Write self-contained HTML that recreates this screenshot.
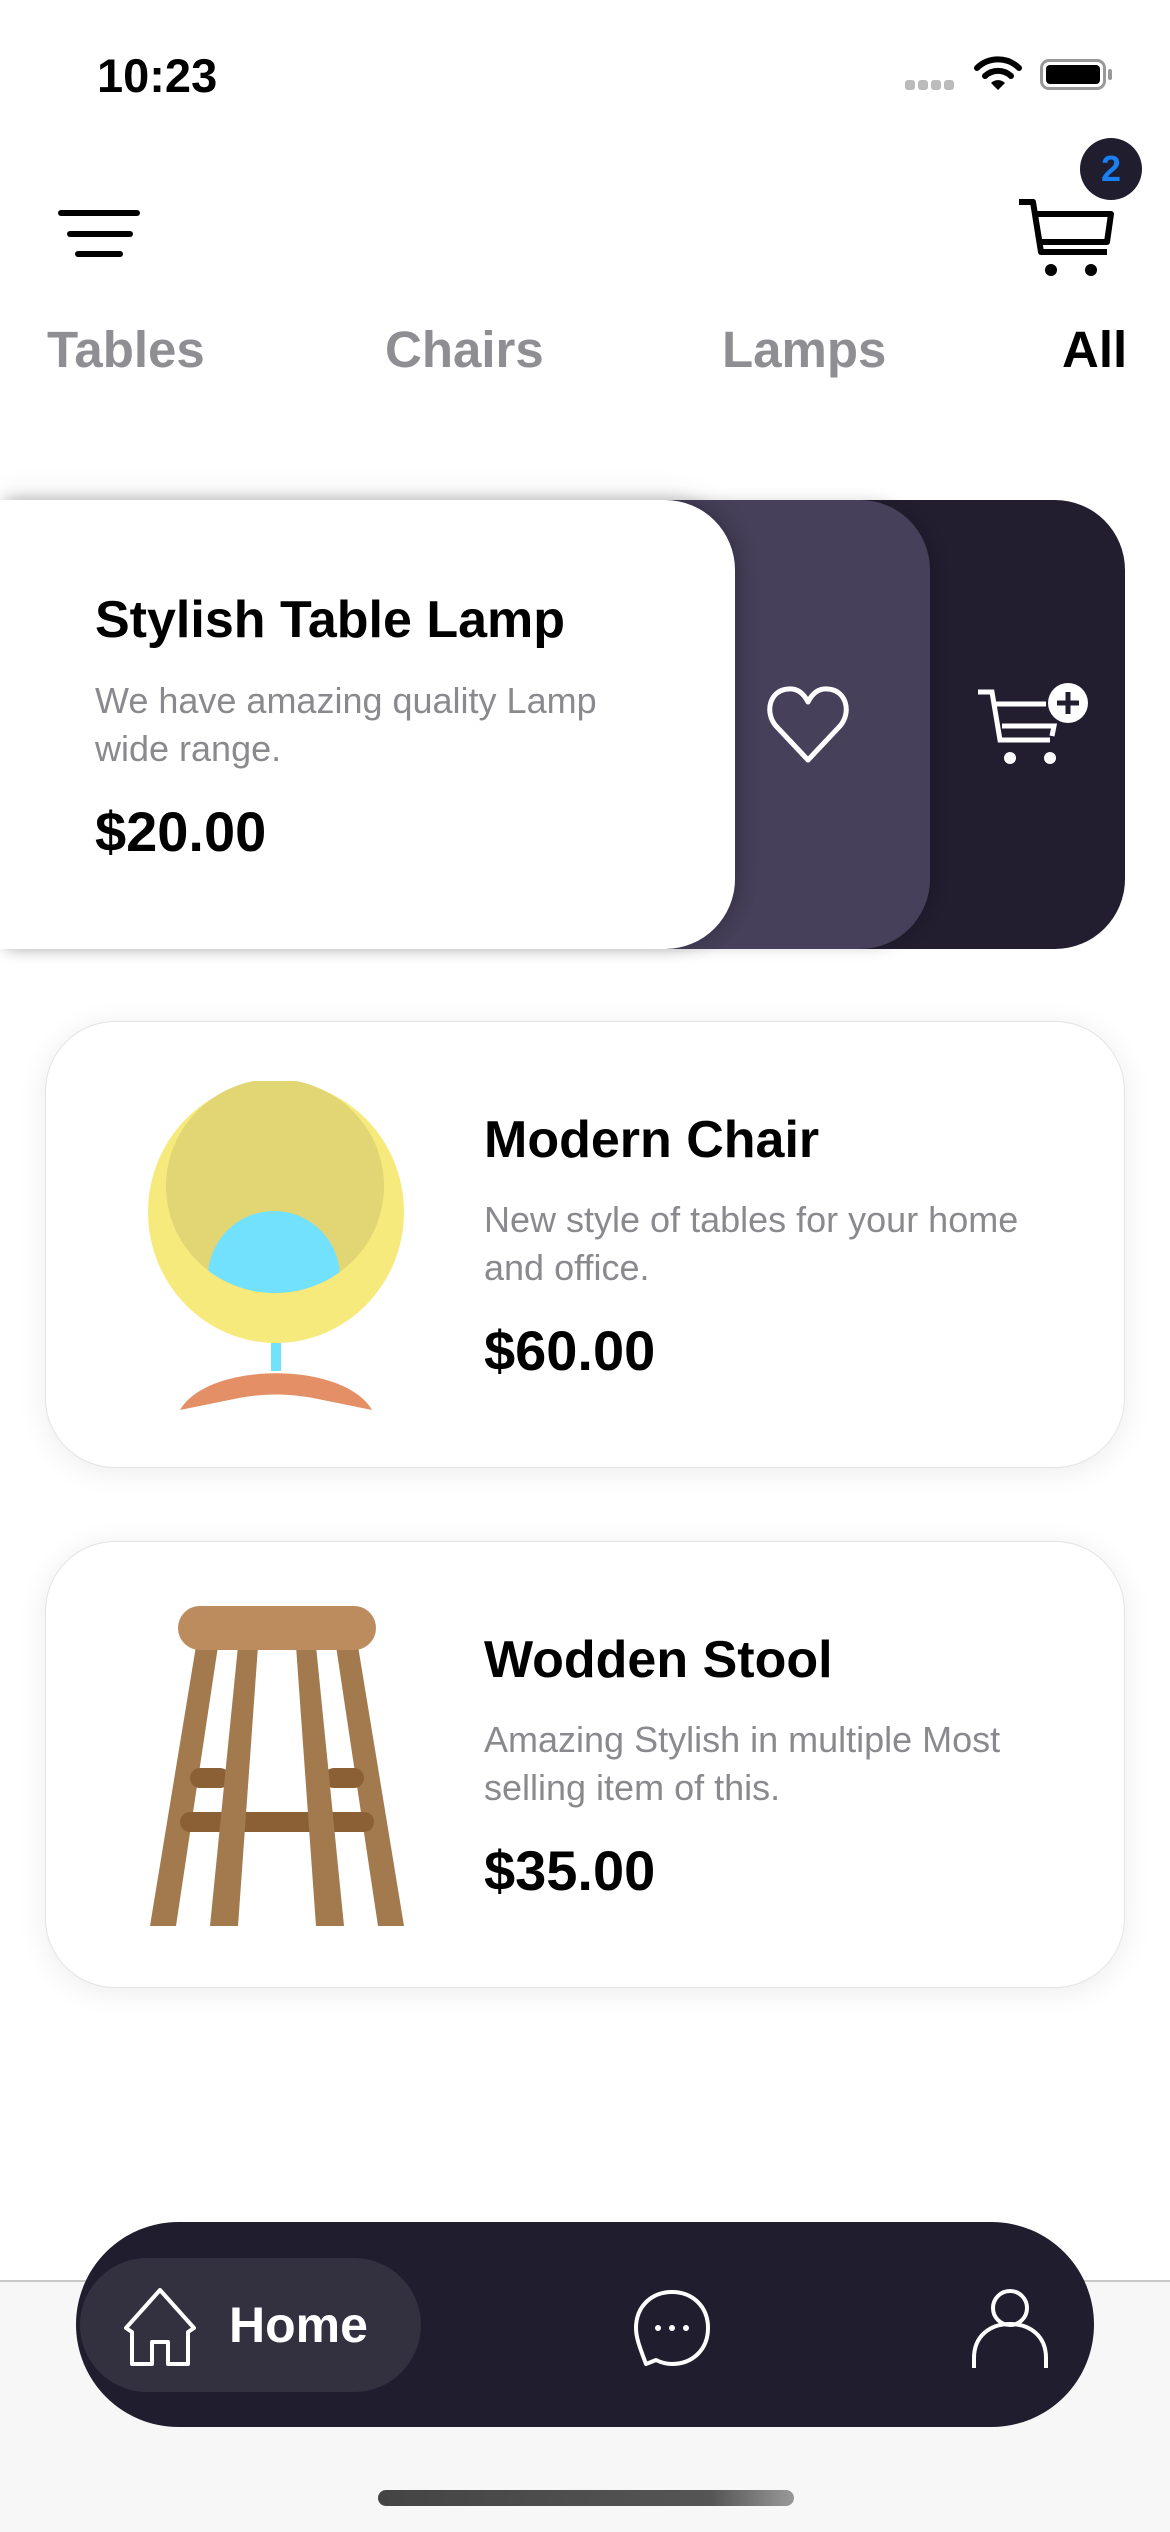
<!DOCTYPE html>
<html><head><meta charset="utf-8"><style>
*{margin:0;padding:0;box-sizing:border-box}
body{width:1170px;height:2532px;position:relative;background:#fff;font-family:"Liberation Sans",sans-serif;overflow:hidden}
.a{position:absolute}
.tab{position:absolute;top:320px;font-size:51px;font-weight:bold;color:#8e8e93}
.t{font-size:52px;font-weight:bold;color:#000;position:absolute}
.d{font-size:36px;color:#8a8a8e;line-height:48px;position:absolute}
.p{font-size:56px;font-weight:bold;color:#000;position:absolute}
.card{position:absolute;left:45px;width:1080px;height:447px;background:#fff;border-radius:70px;box-shadow:0 4px 30px rgba(0,0,0,0.08);border:1px solid #e4e4e4}
</style></head><body>
<div class="a" style="left:97px;top:48px;font-size:47px;font-weight:600;color:#000">10:23</div>
<div class="a" style="left:905px;top:80px;width:50px;height:10px;display:flex;gap:3px"><i style="width:10px;height:10px;background:#bbb;border-radius:3px"></i><i style="width:10px;height:10px;background:#bbb;border-radius:3px"></i><i style="width:10px;height:10px;background:#bbb;border-radius:3px"></i><i style="width:10px;height:10px;background:#bbb;border-radius:3px"></i></div>
<svg class="a" style="left:973px;top:56px" width="50" height="36" viewBox="0 0 50 36"><path d="M4 12 A30 30 0 0 1 46 12" stroke="#000" stroke-width="6" fill="none" stroke-linecap="round"/><path d="M12 20 A19 19 0 0 1 38 20" stroke="#000" stroke-width="6" fill="none" stroke-linecap="round"/><path d="M18 27 L25 34 L32 27 A10 10 0 0 0 18 27Z" fill="#000"/></svg>
<div class="a" style="left:1040px;top:59px;width:66px;height:31px;border:3px solid #999;border-radius:9px;padding:3px"><div style="width:100%;height:100%;background:#000;border-radius:4px"></div></div>
<div class="a" style="left:1108px;top:69px;width:4px;height:11px;background:#999;border-radius:2px"></div>
<div class="a" style="left:58px;top:210px;width:82px;height:6px;background:#000;border-radius:3px"></div>
<div class="a" style="left:67px;top:231px;width:66px;height:6px;background:#000;border-radius:3px"></div>
<div class="a" style="left:75px;top:251px;width:48px;height:6px;background:#000;border-radius:3px"></div>
<svg class="a" style="left:1015px;top:194px" width="100" height="90" viewBox="0 0 100 90"><path d="M4 8 H18 L26 58 H92 M20 20 H96 L92 48 H26" stroke="#000" stroke-width="6" fill="none" stroke-linejoin="round"/><circle cx="36" cy="76" r="6" fill="#000"/><circle cx="76" cy="76" r="6" fill="#000"/></svg>
<div class="a" style="left:1080px;top:138px;width:62px;height:62px;border-radius:50%;background:#201d2e;color:#1a7ff0;font-size:36px;font-weight:bold;text-align:center;line-height:62px">2</div>
<div class="tab" style="left:47px">Tables</div>
<div class="tab" style="left:385px">Chairs</div>
<div class="tab" style="left:722px">Lamps</div>
<div class="tab" style="left:1062px;color:#000">All</div>

<div class="a" style="left:0;top:500px;width:1125px;height:449px;background:#221e30;border-radius:0 70px 70px 0"></div>
<div class="a" style="left:0;top:500px;width:930px;height:449px;background:#46405a;border-radius:0 70px 70px 0;box-shadow:6px 0 14px rgba(0,0,0,0.15)"></div>
<div class="a" style="left:0;top:500px;width:735px;height:449px;background:#fff;border-radius:0 70px 70px 0;box-shadow:0 -6px 30px rgba(0,0,0,0.08),6px 0 16px rgba(0,0,0,0.15)"></div>
<div class="t" style="left:95px;top:590px">Stylish Table Lamp</div>
<div class="d" style="left:95px;top:677px">We have amazing quality Lamp<br>wide range.</div>
<div class="p" style="left:95px;top:799px">$20.00</div>
<svg class="a" style="left:766px;top:684px" width="84" height="80" viewBox="0 0 84 80"><path d="M42 76 L10 42 C-2 28 4 6 22 5 C32 4 38 10 42 18 C46 10 52 4 62 5 C80 6 86 28 74 42 Z" stroke="#fff" stroke-width="5" fill="none" stroke-linejoin="round"/></svg>
<svg class="a" style="left:976px;top:680px" width="116" height="92" viewBox="0 0 116 92"><path d="M2 12 H16 L24 60 H74 M18 24 H70 M26 46 H78 L76 56" stroke="#fff" stroke-width="5" fill="none"/><circle cx="34" cy="78" r="6" fill="#fff"/><circle cx="74" cy="78" r="6" fill="#fff"/><circle cx="92" cy="23" r="20" fill="#fff"/><path d="M92 12 V34 M81 23 H103" stroke="#221e30" stroke-width="5"/></svg>

<div class="card" style="top:1021px"></div>
<svg class="a" style="left:148px;top:1081px" width="256" height="330" viewBox="0 0 256 330"><defs><clipPath id="ie"><ellipse cx="127" cy="105" rx="109" ry="107"/></clipPath></defs><ellipse cx="128" cy="131" rx="128" ry="131" fill="#f7ea7c"/><ellipse cx="127" cy="105" rx="109" ry="107" fill="#e2d574"/><circle cx="126" cy="196" r="66" fill="#72e1fd" clip-path="url(#ie)"/><rect x="123" y="262" width="10" height="28" fill="#72e1fd"/><path d="M32 329 C60 280 196 280 224 329 L170 318 C140 312 116 312 86 318 Z" fill="#e48f66"/></svg>
<div class="t" style="left:484px;top:1110px">Modern Chair</div>
<div class="d" style="left:484px;top:1196px">New style of tables for your home<br>and office.</div>
<div class="p" style="left:484px;top:1318px">$60.00</div>

<div class="card" style="top:1541px"></div>
<svg class="a" style="left:150px;top:1606px" width="254" height="320" viewBox="0 0 254 320"><g fill="#a27a4e"><polygon points="46,40 68,40 26,320 0,320"/><polygon points="208,40 186,40 228,320 254,320"/></g><rect x="40" y="162" width="40" height="20" rx="10" fill="#8b6034"/><rect x="174" y="162" width="40" height="20" rx="10" fill="#8b6034"/><rect x="30" y="206" width="194" height="20" rx="10" fill="#8b6034"/><g fill="#a27a4e"><polygon points="88,40 108,40 88,320 60,320"/><polygon points="166,40 146,40 166,320 194,320"/></g><rect x="28" y="0" width="198" height="44" rx="22" fill="#bc8b5e"/></svg>
<div class="t" style="left:484px;top:1630px">Wodden Stool</div>
<div class="d" style="left:484px;top:1716px">Amazing Stylish in multiple Most<br>selling item of this.</div>
<div class="p" style="left:484px;top:1838px">$35.00</div>

<div class="a" style="left:0;top:2280px;width:1170px;height:252px;background:#f7f7f7;border-top:2px solid #c8c8c8"></div>
<div class="a" style="left:76px;top:2222px;width:1018px;height:205px;background:#201d2e;border-radius:103px"></div>
<div class="a" style="left:80px;top:2258px;width:341px;height:134px;background:#33303f;border-radius:67px"></div>
<svg class="a" style="left:120px;top:2286px" width="80" height="80" viewBox="0 0 80 80"><path d="M40 4 L6 42 L12 46 V78 H32 V56 H48 V78 H68 V46 L74 42 Z" stroke="#fff" stroke-width="4" fill="none" stroke-linejoin="round"/></svg>
<div class="a" style="left:229px;top:2296px;font-size:50px;font-weight:bold;color:#fff">Home</div>
<svg class="a" style="left:632px;top:2288px" width="80" height="80" viewBox="0 0 80 80"><path d="M14 76 C8 60 4 50 4 40 C4 18 20 4 40 4 C60 4 76 18 76 40 C76 62 60 76 40 76 C34 76 28 74 24 72 Z" stroke="#fff" stroke-width="4" fill="none" stroke-linejoin="round"/><circle cx="26" cy="40" r="3" fill="#fff"/><circle cx="40" cy="40" r="3" fill="#fff"/><circle cx="54" cy="40" r="3" fill="#fff"/></svg>
<svg class="a" style="left:970px;top:2288px" width="80" height="80" viewBox="0 0 80 80"><circle cx="40" cy="20" r="17" stroke="#fff" stroke-width="4" fill="none"/><path d="M4 80 V70 C4 48 20 36 40 36 C60 36 76 48 76 70 V80" stroke="#fff" stroke-width="4" fill="none"/></svg>
<div class="a" style="left:378px;top:2490px;width:416px;height:16px;border-radius:8px;background:linear-gradient(90deg,#444,#555 80%,#999)"></div>
</body></html>
